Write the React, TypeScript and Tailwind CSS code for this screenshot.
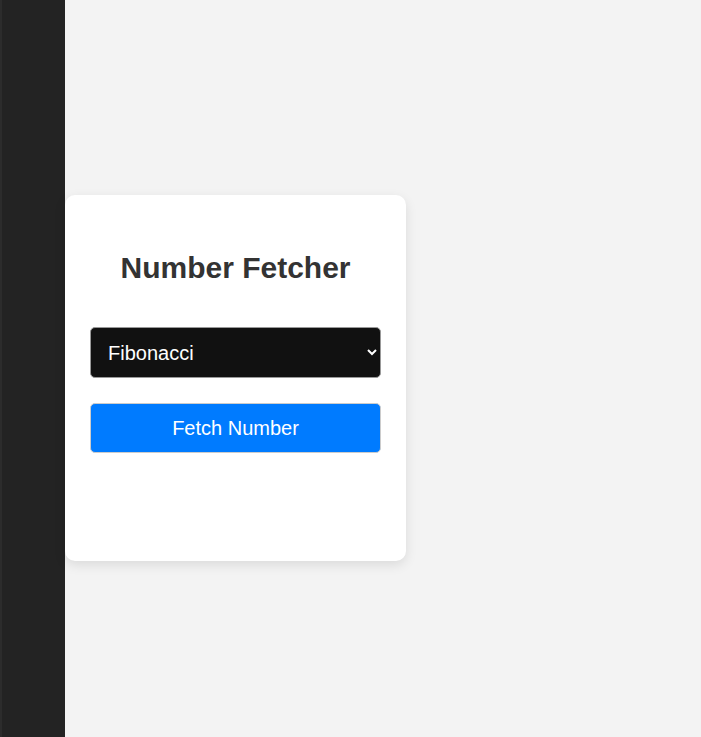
import React from "react";

export default function App() {
  return (
    <div className="flex h-[737px] w-full bg-[#f3f3f3]" style={{ fontFamily: '"Liberation Sans", Arial, sans-serif' }}>
      <div className="flex h-full w-[65px] shrink-0 bg-[#232323]">
        <div className="h-full w-[2px] bg-[#2c2c2c]" />
      </div>
      <div className="flex flex-col pt-[195px]">
        <div className="flex h-[366px] w-[341px] flex-col rounded-[10px] bg-white px-[25px] pt-[51px] shadow-[0_4px_12px_rgba(0,0,0,0.1)]">
          <h1 className="text-center text-[30px] font-bold leading-[44px] text-[#333]">Number Fetcher</h1>
          <select
            defaultValue="fib"
            className="mt-[37px] h-[51px] w-full rounded-[5px] border border-[#999] bg-[#111] pl-[13px] pr-2 text-[20px] text-white outline-none"
          >
            <option value="fib">Fibonacci</option>
            <option value="prime">Prime</option>
            <option value="even">Even</option>
            <option value="rand">Random</option>
          </select>
          <button className="mt-[25px] h-[50px] w-full rounded-[5px] border border-[#ccc] bg-[#007bff] text-[20px] text-white">
            Fetch Number
          </button>
        </div>
      </div>
    </div>
  );
}
